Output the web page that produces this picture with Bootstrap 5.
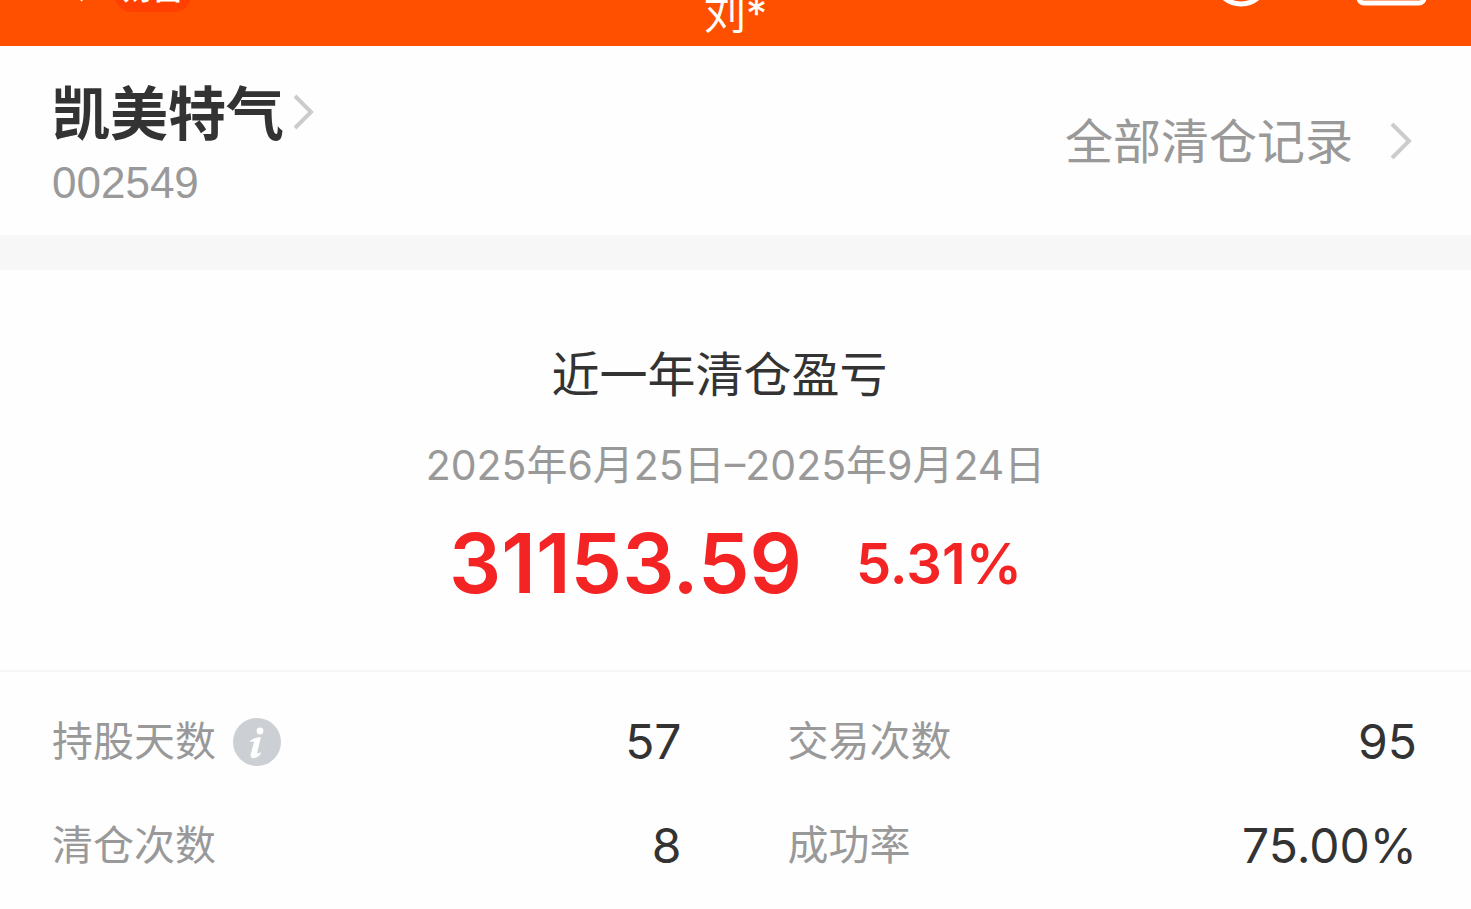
<!DOCTYPE html>
<html lang="zh-CN">
<head>
<meta charset="utf-8">
<meta name="viewport" content="width=device-width, initial-scale=1">
<title>清仓盈亏</title>
<link href="https://cdn.jsdelivr.net/npm/bootstrap@5.3.0/dist/css/bootstrap.min.css" rel="stylesheet">
<style>
  body { font-family: Inter, "Noto Sans CJK SC", sans-serif; color: #333; background: #fefefe; }
  a { color: inherit; text-decoration: none; }
  svg { display: block; flex: none; }
  .topbar { height: 46px; background: #ff5000; color: #fff; }
  .topbar-side { flex: 1 1 0; }
  .account { font-size: 42px; line-height: 60px; font-weight: 400; margin-bottom: 2px; }
  .tag { font-size: 30px; line-height: 36px; font-weight: 700; background: #ff4000; border-radius: 16px; margin-bottom: 34px; padding: 0 8px 6px; }
  .side-pad { padding-left: 52px; padding-right: 54px; }
  .stock { padding-top: 33px; padding-bottom: 18px; }
  .stock-name { font-size: 58px; line-height: 70px; font-weight: 700; }
  .stock-code { font-family: "Liberation Sans", sans-serif; font-size: 44px; line-height: 68px; color: #999; }
  .records { font-size: 48px; line-height: 64px; color: #999; gap: 36px; padding-bottom: 12px; }
  .strip { height: 35px; background: #f7f7f7; }
  .summary { padding-top: 70px; padding-bottom: 54px; border-bottom: 2px solid #f5f5f5; }
  .summary h1 { font-size: 48px; line-height: 70px; font-weight: 400; padding-right: 32px; }
  .period { font-size: 41px; line-height: 60px; color: #999; margin-top: 25px; }
  .gain { color: #f52424; font-weight: 600; line-height: 104px; margin-top: 17px; gap: 54px; }
  .gain-sum { font-size: 82px; }
  .gain-rate { font-size: 56px; }
  .stats { padding-top: 34px; column-gap: 106px; row-gap: 32px; display: grid; grid-template-columns: 1fr 1fr; }
  .stats .cell { height: 72px; }
  .stats dt { font-size: 41px; font-weight: 400; color: #999; }
  .stats dd { font-size: 48px; margin: 0; }
</style>
</head>
<body>
<header class="topbar d-flex align-items-end overflow-hidden">
  <div class="topbar-side d-flex align-items-end">
    <svg width="115" height="46" viewBox="0 0 115 46" aria-hidden="true"><path d="M83 0 62-20 83-40" fill="none" stroke="#fff" stroke-width="4"/></svg>
    <span class="tag">财富</span>
  </div>
  <span class="account">刘*</span>
  <div class="topbar-side d-flex justify-content-end">
    <svg width="254" height="46" viewBox="0 0 254 46" fill="none" stroke="#fff" stroke-width="5" aria-hidden="true"><circle cx="24" cy="-22" r="26"/><rect x="142" y="-44" width="65" height="47" rx="5"/></svg>
  </div>
</header>
<main>
  <section class="stock side-pad d-flex justify-content-between align-items-center">
    <div>
      <a href="#" class="stock-name d-flex align-items-center">凯美特气
        <svg width="32" height="42" viewBox="0 0 32 42" aria-hidden="true"><path d="M11 3 27 19 11 35" fill="none" stroke="#ccc" stroke-width="4"/></svg></a>
      <div class="stock-code">002549</div>
    </div>
    <a href="#" class="records d-flex align-items-center">全部清仓记录
      <svg width="28" height="42" viewBox="0 0 28 42" aria-hidden="true"><path d="M3 3 20 20 3 37" fill="none" stroke="#ccc" stroke-width="4"/></svg></a>
  </section>
  <div class="strip"></div>
  <section class="summary text-center">
    <h1 class="m-0">近一年清仓盈亏</h1>
    <div class="period">2025年6月25日–2025年9月24日</div>
    <div class="gain d-flex justify-content-center"><span class="gain-sum">31153.59</span><span class="gain-rate">5.31%</span></div>
  </section>
  <dl class="stats side-pad m-0">
    <div class="cell d-flex justify-content-between align-items-center">
      <dt class="d-flex align-items-center gap-3">持股天数
        <svg width="50" height="50" viewBox="0 0 50 50" aria-hidden="true"><circle cx="25" cy="25" r="24" fill="#cccfd4"/><circle cx="28" cy="14" r="3.4" fill="#fff"/><path d="M18 24Q23 20 29 20L25 36Q26 37 29 35L28 38Q24 42 20 41Q18 40 19 36L22 25Q21 24 18 25Z" fill="#fff"/></svg></dt>
      <dd>57</dd>
    </div>
    <div class="cell d-flex justify-content-between align-items-center"><dt>交易次数</dt><dd>95</dd></div>
    <div class="cell d-flex justify-content-between align-items-center"><dt>清仓次数</dt><dd>8</dd></div>
    <div class="cell d-flex justify-content-between align-items-center"><dt>成功率</dt><dd>75.00%</dd></div>
  </dl>
</main>
<script src="https://cdn.jsdelivr.net/npm/bootstrap@5.3.0/dist/js/bootstrap.bundle.min.js"></script>
</body>
</html>
